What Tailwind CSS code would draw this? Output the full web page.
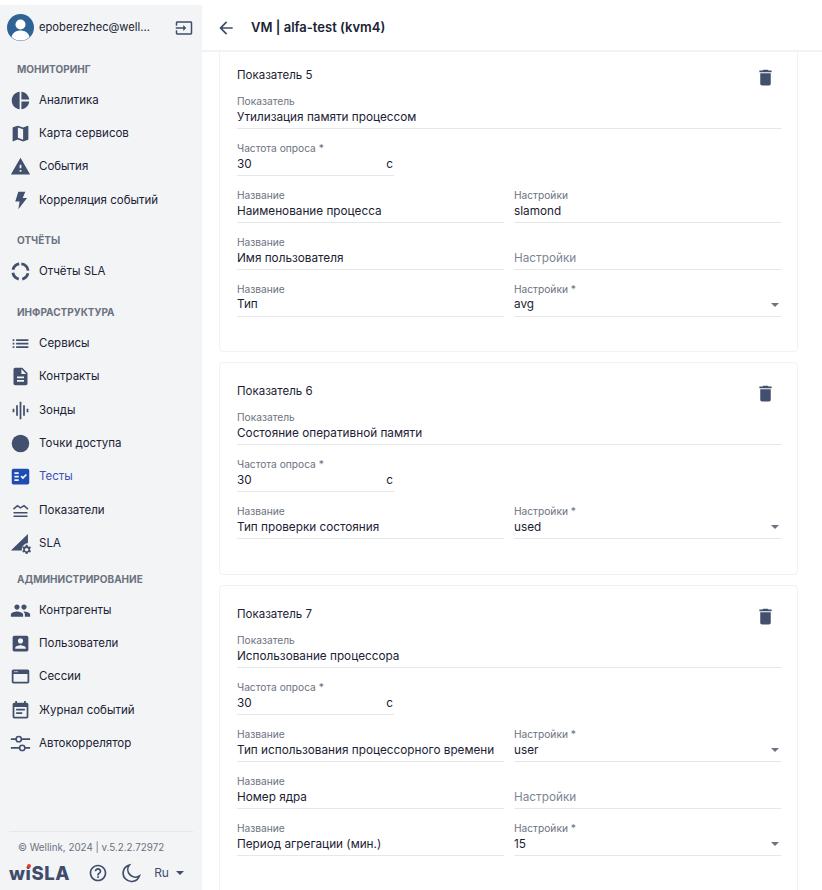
<!DOCTYPE html>
<html lang="ru"><head><meta charset="utf-8"><script src="https://cdn.jsdelivr.net/npm/@tailwindcss/browser@4"></script></head>
<body class="bg-white">
<div class="flex w-[822px] h-[890px] overflow-hidden font-['Inter','Noto_Sans',sans-serif] text-[#1a2233]">
<aside class="w-[202px] h-[885px] mt-[5px] shrink-0 bg-[#f3f4f6] flex flex-col">
  <div class="h-[45px] flex items-center pl-[7px]">
    <svg class="w-[27px] h-[27px] shrink-0" viewBox="0 0 27 27"><circle cx="13.5" cy="13.5" r="13.5" fill="#2f6396"/><circle cx="13.5" cy="10.5" r="5" fill="#fff"/><path d="M4.5 23c1-4.500 5-6.500 9-6.500s8 2 9 6.500a13 13 0 0 1-18 0z" fill="#fff"/></svg>
    <span class="ml-[5px] w-[112px] text-[11.200px] whitespace-nowrap">epoberezhec@well...</span>
    <svg class="ml-[24px] w-[18px] h-[18px]" viewBox="0 0 24 24" fill="#3f4d6b"><path d="M21 3.010H3c-1.100 0-2 .9-2 2V9h2V4.990h18v14.030H3V15H1v4.010c0 1.100.9 1.980 2 1.980h18c1.100 0 2-.88 2-1.980v-14c0-1.110-.9-2-2-2zM11 16l4-4-4-4v3H1v2h10v3z"/></svg>
  </div>
  <nav class="flex flex-col pl-[10px]">
    <div class="h-[15px] mt-[12px] mb-[6.500px] pl-[7px] text-[10px] leading-[15px] font-bold text-[#6b7280]">МОНИТОРИНГ</div>
    <div class="flex items-center h-[33.330px] gap-[8px] text-[11.500px]"><svg class="w-[21px] h-[21px]" viewBox="0 0 24 24" fill="#424f6d"><path d="M11 2v20c-5.070-.5-9-4.790-9-10s3.930-9.500 9-10zm2.030 0v8.990H22c-.47-4.740-4.240-8.520-8.970-8.990zm0 11.010V22c4.740-.47 8.500-4.250 8.970-8.990h-8.970z"/></svg>Аналитика</div>
    <div class="flex items-center h-[33.330px] gap-[8px] text-[11.500px]"><svg class="w-[21px] h-[21px]" viewBox="0 0 24 24" fill="#424f6d"><path d="M20.500 3l-.16.03L15 5.100 9 3 3.360 4.900c-.21.07-.36.25-.36.48V20.500c0 .28.22.5.5.5l.16-.03L9 18.900l6 2.100 5.640-1.900c.21-.07.36-.25.36-.48V3.500c0-.28-.22-.5-.5-.5zM15 19l-6-2.110V5l6 2.110V19z"/></svg>Карта сервисов</div>
    <div class="flex items-center h-[33.330px] gap-[8px] text-[11.500px]"><svg class="w-[21px] h-[21px]" viewBox="0 0 24 24" fill="#424f6d"><path d="M1 21h22L12 2 1 21zm12-3h-2v-2h2v2zm0-4h-2v-4h2v4z"/></svg>События</div>
    <div class="flex items-center h-[33.330px] gap-[8px] text-[11.500px]"><svg class="w-[21px] h-[21px]" viewBox="0 0 24 24" fill="#424f6d"><path d="M9.500 2h8l-3 7h5L9.500 22l1.500-9H6z"/></svg>Корреляция событий</div>
    <div class="h-[15px] mt-[16px] mb-[7.200px] pl-[7px] text-[10px] leading-[15px] font-bold text-[#6b7280]">ОТЧЁТЫ</div>
    <div class="flex items-center h-[33.330px] gap-[8px] text-[11.500px]"><svg class="w-[21px] h-[21px]" viewBox="0 0 24 24" fill="none" stroke="#424f6d" stroke-width="3.200"><path d="M13 3.300A8.800 8.800 0 0 1 20.700 11M20.500 14A8.800 8.800 0 0 1 14 20.600M10 20.600A8.800 8.800 0 0 1 3.300 13.500M3.400 10A8.800 8.800 0 0 1 10.500 3.300"/></svg>Отчёты SLA</div>
    <div class="h-[15px] mt-[16.500px] mb-[7px] pl-[7px] text-[10px] leading-[15px] font-bold text-[#6b7280]">ИНФРАСТРУКТУРА</div>
    <div class="flex items-center h-[33.330px] gap-[8px] text-[11.500px]"><svg class="w-[21px] h-[21px]" viewBox="0 0 24 24" fill="#424f6d"><path d="M3 13h2v-2H3v2zm0 4h2v-2H3v2zm0-8h2V7H3v2zm4 4h14v-2H7v2zm0 4h14v-2H7v2zM7 7v2h14V7H7z"/></svg>Сервисы</div>
    <div class="flex items-center h-[33.330px] gap-[8px] text-[11.500px]"><svg class="w-[21px] h-[21px]" viewBox="0 0 24 24" fill="#424f6d"><path d="M14 2H6c-1.100 0-1.990.9-1.990 2L4 20c0 1.100.89 2 1.990 2H18c1.100 0 2-.9 2-2V8l-6-6zm2 16H8v-2h8v2zm0-4H8v-2h8v2zm-3-5V3.500L18.500 9H13z"/></svg>Контракты</div>
    <div class="flex items-center h-[33.330px] gap-[8px] text-[11.500px]"><svg class="w-[21px] h-[21px]" viewBox="0 0 24 24" fill="#424f6d"><path d="M7 18h2V6H7v12zm4 4h2V2h-2v20zm-8-8h2v-4H3v4zm12 4h2V6h-2v12zm4-8v4h2v-4h-2z"/></svg>Зонды</div>
    <div class="flex items-center h-[33.330px] gap-[8px] text-[11.500px]"><svg class="w-[21px] h-[21px]" viewBox="0 0 24 24" fill="#424f6d"><circle cx="12" cy="12" r="10"/></svg>Точки доступа</div>
    <div class="flex items-center h-[33.330px] gap-[8px] text-[11.500px] text-[#3f51b5]"><svg class="w-[21px] h-[21px]" viewBox="0 0 24 24" fill="#1d4db0"><path d="M20 3H4c-1.100 0-2 .9-2 2v14c0 1.100.9 2 2 2h16c1.100 0 2-.9 2-2V5c0-1.100-.9-2-2-2zM10 17H5v-2h5v2zm0-4H5v-2h5v2zm0-4H5V7h5v2zm4.820 6L12 12.160l1.410-1.410 1.410 1.420L17.990 9l1.420 1.420L14.820 15z"/></svg>Тесты</div>
    <div class="flex items-center h-[33.330px] gap-[8px] text-[11.500px]"><svg class="w-[21px] h-[21px]" viewBox="0 0 24 24" fill="none" stroke="#424f6d" stroke-width="1.800"><path d="M4 10.500l4.500-4 3.500 2.500 4-2.500 4.500 4M4 14.500h16M4 18.500h16"/></svg>Показатели</div>
    <div class="flex items-center h-[33.330px] gap-[8px] text-[11.500px]"><svg class="w-[21px] h-[21px] overflow-visible" viewBox="0 0 24 24" fill="#424f6d"><path d="M1 20L20.500 1v10.500a7.500 7.500 0 0 0-7 8.500z"/><path d="M18 13.500h2l.3 1.600 1.200.7 1.500-.5 1 1.700-1.200 1.100v1.400l1.200 1.100-1 1.700-1.500-.5-1.200.7-.3 1.600h-2l-.3-1.600-1.200-.7-1.500.5-1-1.700 1.200-1.100v-1.400l-1.200-1.100 1-1.700 1.500.5 1.200-.7zM19 17a2 2 0 1 0 .01 0z" fill-rule="evenodd"/></svg>SLA</div>
    <div class="h-[15px] mt-[12px] mb-[6.500px] pl-[7px] text-[10px] leading-[15px] font-bold text-[#6b7280]">АДМИНИСТРИРОВАНИЕ</div>
    <div class="flex items-center h-[33.330px] gap-[8px] text-[11.500px]"><svg class="w-[21px] h-[21px]" viewBox="0 0 24 24" fill="#424f6d"><path d="M16 11c1.660 0 2.990-1.340 2.990-3S17.660 5 16 5c-1.660 0-3 1.340-3 3s1.340 3 3 3zm-8 0c1.660 0 2.990-1.340 2.990-3S9.660 5 8 5C6.340 5 5 6.340 5 8s1.340 3 3 3zm0 2c-2.330 0-7 1.170-7 3.500V19h14v-2.500c0-2.330-4.670-3.500-7-3.500zm8 0c-.29 0-.62.02-.97.05 1.160.84 1.970 1.970 1.970 3.450V19h6v-2.500c0-2.330-4.670-3.500-7-3.500z"/></svg>Контрагенты</div>
    <div class="flex items-center h-[33.330px] gap-[8px] text-[11.500px]"><svg class="w-[21px] h-[21px]" viewBox="0 0 24 24" fill="#424f6d"><path d="M3 5v14c0 1.100.89 2 2 2h14c1.100 0 2-.9 2-2V5c0-1.100-.9-2-2-2H5c-1.110 0-2 .9-2 2zm12 4c0 1.660-1.340 3-3 3s-3-1.340-3-3 1.340-3 3-3 3 1.340 3 3zm-9 8c0-2 4-3.100 6-3.100s6 1.100 6 3.100v1H6v-1z"/></svg>Пользователи</div>
    <div class="flex items-center h-[33.330px] gap-[8px] text-[11.500px]"><svg class="w-[21px] h-[21px]" viewBox="0 0 24 24" fill="#424f6d"><path d="M20 4H4c-1.100 0-1.990.9-1.990 2L2 18c0 1.100.9 2 2 2h16c1.100 0 2-.9 2-2V6c0-1.100-.9-2-2-2zM4 9h16v9H4V9zM5 5.700h1.300V7H5zM7.300 5.700h1.300V7H7.300z" fill-rule="evenodd"/></svg>Сессии</div>
    <div class="flex items-center h-[33.330px] gap-[8px] text-[11.500px]"><svg class="w-[21px] h-[21px]" viewBox="0 0 24 24" fill="#424f6d"><path d="M17 10H7v2h10v-2zm2-7h-1V1h-2v2H8V1H6v2H5c-1.110 0-1.990.9-1.990 2L3 19c0 1.100.89 2 2 2h14c1.100 0 2-.9 2-2V5c0-1.100-.9-2-2-2zm0 16H5V8h14v11zm-5-5H7v2h7v-2z"/></svg>Журнал событий</div>
    <div class="flex items-center h-[33.330px] gap-[8px] text-[11.500px]"><svg class="w-[21px] h-[21px]" viewBox="0 0 24 24" fill="none" stroke="#424f6d" stroke-width="1.800"><path d="M1 7h6M13 7h10M1 17h10M17 17h6"/><circle cx="10" cy="7" r="3"/><circle cx="14" cy="17" r="3"/></svg>Автокоррелятор</div>
  </nav>
  <div class="mt-auto mx-[9px] border-t border-[#e5e7eb] h-[59px]">
    <div class="pl-[9px] mt-[9px] text-[9.800px] leading-[14px] text-[#6b7280]">© Wellink, 2024 | v.5.2.2.72972</div>
    <div class="flex items-center mt-[8px]">
      <span class="relative text-[18.500px] leading-[20px] font-extrabold tracking-[0.6px] text-[#3f4d6b]">wiSLA<span class="absolute left-[18px] top-[0.500px] w-[4px] h-[4px] rounded-full bg-[#e53935]"></span></span>
      <svg class="ml-[18px] w-[20px] h-[20px]" viewBox="0 0 24 24" fill="#3f4d6b"><path d="M11 18h2v-2h-2v2zm1-16C6.480 2 2 6.480 2 12s4.480 10 10 10 10-4.480 10-10S17.520 2 12 2zm0 18c-4.410 0-8-3.590-8-8s3.590-8 8-8 8 3.590 8 8-3.590 8-8 8zm0-14c-2.210 0-4 1.790-4 4h2c0-1.100.9-2 2-2s2 .9 2 2c0 2-3 1.750-3 5h2c0-2.250 3-2.500 3-5 0-2.210-1.790-4-4-4z"/></svg>
      <svg class="ml-[13px] w-[20px] h-[20px]" viewBox="0 0 24 24" fill="none" stroke="#3f4d6b" stroke-width="2"><path d="M10 2.500a10 10 0 1 0 12 13 9 9 0 0 1-12-13z"/></svg>
      <span class="ml-[13px] text-[12px] text-[#3f4d6b]">Ru</span>
      <svg class="ml-[7px] w-[8px] h-[4px]" viewBox="0 0 8 4" fill="#3f4d6b"><path d="M0 0h8L4 4z"/></svg>
    </div>
  </div>
</aside>
<main class="flex-1 min-w-0 flex flex-col mt-[5px]">
  <header class="h-[47px] shrink-0 flex items-center pl-[14px] border-b-2 border-[#f1f2f4] relative z-10 bg-white">
    <svg class="w-[20px] h-[20px]" viewBox="0 0 24 24" fill="#3f4d6b"><path d="M20 11H7.830l5.590-5.590L12 4l-8 8 8 8 1.410-1.410L7.830 13H20v-2z"/></svg>
    <h1 class="ml-[15px] text-[13px] font-semibold">VM | alfa-test (kvm4)</h1>
  </header>
  <div class="flex-1 overflow-hidden pl-[17px] pr-[24px]">
    <section class="-mt-[6px] h-[306px] pt-[20px] pl-[17px] pr-[15px] border border-[#f1f2f4] rounded-[4px] mb-[10px]">
      <div class="flex justify-between items-start h-[28px]"><div class="text-[11.500px] leading-[16px]">Показатель 5</div><svg class="w-[21px] h-[21px] mr-[6.500px] -mt-[0.500px]" viewBox="0 0 24 24" fill="#424f6d"><path d="M6 19c0 1.100.9 2 2 2h8c1.100 0 2-.9 2-2V7H6v12zM19 4h-3.500l-1-1h-5l-1 1H5v2h14V4z"/></svg></div>
      <div class="flex flex-col gap-[13px]">
        <div class="h-[34px] border-b border-[#e5e7eb]"><div class="text-[10.200px] leading-[13px] text-[#6b7280]">Показатель</div><div class="text-[11.750px] leading-[18px]">Утилизация памяти процессом</div></div>
        <div class="h-[34px] w-[157px] border-b border-[#e5e7eb]"><div class="text-[10.200px] leading-[13px] text-[#6b7280]">Частота опроса *</div><div class="flex justify-between text-[11.750px] leading-[18px]"><span>30</span><span class="pr-[1px]">с</span></div></div>
        <div class="grid grid-cols-[267px_267px] gap-x-[10px]"><div class="h-[34px] border-b border-[#e5e7eb]"><div class="text-[10.200px] leading-[13px] text-[#6b7280]">Название</div><div class="text-[11.750px] leading-[18px]">Наименование процесса</div></div><div class="h-[34px] border-b border-[#e5e7eb]"><div class="text-[10.200px] leading-[13px] text-[#6b7280]">Настройки</div><div class="text-[11.750px] leading-[18px]">slamond</div></div></div>
        <div class="grid grid-cols-[267px_267px] gap-x-[10px]"><div class="h-[34px] border-b border-[#e5e7eb]"><div class="text-[10.200px] leading-[13px] text-[#6b7280]">Название</div><div class="text-[11.750px] leading-[18px]">Имя пользователя</div></div><div class="h-[34px] border-b border-[#e5e7eb] pt-[13px] text-[11.750px] leading-[18px] text-[#7c8594]">Настройки</div></div>
        <div class="grid grid-cols-[267px_267px] gap-x-[10px]"><div class="h-[34px] border-b border-[#e5e7eb]"><div class="text-[10.200px] leading-[13px] text-[#6b7280]">Название</div><div class="text-[11.750px] leading-[17px]">Тип</div></div><div class="relative h-[34px] border-b border-[#e5e7eb]"><div class="text-[10.200px] leading-[13px] text-[#6b7280]">Настройки *</div><div class="text-[11.750px] leading-[17px]">avg</div><svg class="absolute right-[2px] top-[20px] w-[8px] h-[4px]" viewBox="0 0 8 4" fill="#6b7280"><path d="M0 0h8L4 4z"/></svg></div></div>
      </div>
    </section>
    <section class="h-[213px] pt-[20px] pl-[17px] pr-[15px] border border-[#f1f2f4] rounded-[4px] mb-[10px]">
      <div class="flex justify-between items-start h-[28px]"><div class="text-[11.500px] leading-[16px]">Показатель 6</div><svg class="w-[21px] h-[21px] mr-[6.500px] -mt-[0.500px]" viewBox="0 0 24 24" fill="#424f6d"><path d="M6 19c0 1.100.9 2 2 2h8c1.100 0 2-.9 2-2V7H6v12zM19 4h-3.500l-1-1h-5l-1 1H5v2h14V4z"/></svg></div>
      <div class="flex flex-col gap-[13px]">
        <div class="h-[34px] border-b border-[#e5e7eb]"><div class="text-[10.200px] leading-[13px] text-[#6b7280]">Показатель</div><div class="text-[11.750px] leading-[18px]">Состояние оперативной памяти</div></div>
        <div class="h-[34px] w-[157px] border-b border-[#e5e7eb]"><div class="text-[10.200px] leading-[13px] text-[#6b7280]">Частота опроса *</div><div class="flex justify-between text-[11.750px] leading-[18px]"><span>30</span><span class="pr-[1px]">с</span></div></div>
        <div class="grid grid-cols-[267px_267px] gap-x-[10px]"><div class="h-[34px] border-b border-[#e5e7eb]"><div class="text-[10.200px] leading-[13px] text-[#6b7280]">Название</div><div class="text-[11.750px] leading-[18px]">Тип проверки состояния</div></div><div class="relative h-[34px] border-b border-[#e5e7eb]"><div class="text-[10.200px] leading-[13px] text-[#6b7280]">Настройки *</div><div class="text-[11.750px] leading-[18px]">used</div><svg class="absolute right-[2px] top-[20px] w-[8px] h-[4px]" viewBox="0 0 8 4" fill="#6b7280"><path d="M0 0h8L4 4z"/></svg></div></div>
      </div>
    </section>
    <section class="h-[320px] pt-[20px] pl-[17px] pr-[15px] border border-[#f1f2f4] rounded-[4px]">
      <div class="flex justify-between items-start h-[28px]"><div class="text-[11.500px] leading-[16px]">Показатель 7</div><svg class="w-[21px] h-[21px] mr-[6.500px] -mt-[0.500px]" viewBox="0 0 24 24" fill="#424f6d"><path d="M6 19c0 1.100.9 2 2 2h8c1.100 0 2-.9 2-2V7H6v12zM19 4h-3.500l-1-1h-5l-1 1H5v2h14V4z"/></svg></div>
      <div class="flex flex-col gap-[13px]">
        <div class="h-[34px] border-b border-[#e5e7eb]"><div class="text-[10.200px] leading-[13px] text-[#6b7280]">Показатель</div><div class="text-[11.750px] leading-[18px]">Использование процессора</div></div>
        <div class="h-[34px] w-[157px] border-b border-[#e5e7eb]"><div class="text-[10.200px] leading-[13px] text-[#6b7280]">Частота опроса *</div><div class="flex justify-between text-[11.750px] leading-[18px]"><span>30</span><span class="pr-[1px]">с</span></div></div>
        <div class="grid grid-cols-[267px_267px] gap-x-[10px]"><div class="h-[34px] border-b border-[#e5e7eb]"><div class="text-[10.200px] leading-[13px] text-[#6b7280]">Название</div><div class="text-[11.750px] leading-[18px]">Тип использования процессорного времени</div></div><div class="relative h-[34px] border-b border-[#e5e7eb]"><div class="text-[10.200px] leading-[13px] text-[#6b7280]">Настройки *</div><div class="text-[11.750px] leading-[18px]">user</div><svg class="absolute right-[2px] top-[20px] w-[8px] h-[4px]" viewBox="0 0 8 4" fill="#6b7280"><path d="M0 0h8L4 4z"/></svg></div></div>
        <div class="grid grid-cols-[267px_267px] gap-x-[10px]"><div class="h-[34px] border-b border-[#e5e7eb]"><div class="text-[10.200px] leading-[13px] text-[#6b7280]">Название</div><div class="text-[11.750px] leading-[18px]">Номер ядра</div></div><div class="h-[34px] border-b border-[#e5e7eb] pt-[13px] text-[11.750px] leading-[18px] text-[#7c8594]">Настройки</div></div>
        <div class="grid grid-cols-[267px_267px] gap-x-[10px]"><div class="h-[34px] border-b border-[#e5e7eb]"><div class="text-[10.200px] leading-[13px] text-[#6b7280]">Название</div><div class="text-[11.750px] leading-[18px]">Период агрегации (мин.)</div></div><div class="relative h-[34px] border-b border-[#e5e7eb]"><div class="text-[10.200px] leading-[13px] text-[#6b7280]">Настройки *</div><div class="text-[11.750px] leading-[18px]">15</div><svg class="absolute right-[2px] top-[20px] w-[8px] h-[4px]" viewBox="0 0 8 4" fill="#6b7280"><path d="M0 0h8L4 4z"/></svg></div></div>
      </div>
    </section>
  </div>
</main>
</div>
</body></html>
